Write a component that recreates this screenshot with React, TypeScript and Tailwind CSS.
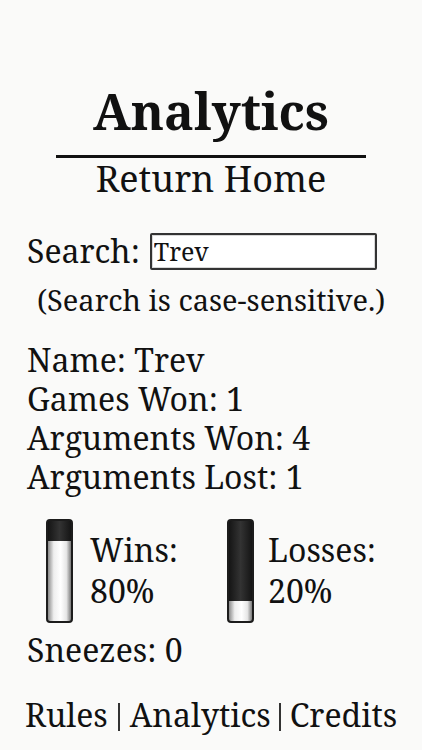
import { useState } from "react";

const SERIF = "font-['Noto_Serif','DejaVu_Serif',serif]";

// --- Cylinder gauge ---

function Gauge({ percent }: { percent: number }) {
  return (
    <div className="flex h-[104px] w-[27px] flex-col overflow-hidden rounded-[4px] border-2 border-[#1c1c1c] bg-[linear-gradient(90deg,#151515_0%,#333_50%,#151515_100%)]">
      <div className="flex-1" />
      <div
        className="w-full bg-[linear-gradient(90deg,#8a8a8a_0%,#eeeeee_25%,#ffffff_55%,#e6e6e6_80%,#7a7a7a_100%)]"
        style={{ height: `${percent}%` }}
      />
    </div>
  );
}

export default function App() {
  const [query, setQuery] = useState("Trev");

  return (
    <div className={`min-h-[750px] w-[422px] bg-[#fafaf9] text-[#111] ${SERIF}`}>
      <div className="flex flex-col items-center pt-[81px]">
        <h1 className="text-[50px] font-bold leading-[60px]">Analytics</h1>
        <div className="mt-[14px] h-[3px] w-[310px] bg-[#111]" />
        <a className="mt-[1px] text-[36px] leading-[40px]">Return Home</a>
      </div>

      <div className="mt-[32px] flex items-start pl-[27px]">
        <span className="text-[32px] leading-[40px]">Search:</span>
        <input
          value={query}
          onChange={(e) => setQuery(e.target.value)}
          className="ml-[10px] mt-[2px] h-[37px] w-[227px] rounded-[2px] border-2 border-[#333] bg-white px-[2px] text-[25px] shadow-[inset_0_0_0_1px_#d8d8d8] outline-none"
        />
      </div>
      <p className="mt-[11px] pl-[37px] text-[29px] leading-[36px]">(Search is case-sensitive.)</p>

      <div className="mt-[22px] pl-[27px] text-[32px] leading-[39px]">
        <div>Name: Trev</div>
        <div>Games Won: 1</div>
        <div>Arguments Won: 4</div>
        <div>Arguments Lost: 1</div>
      </div>

      <div className="mt-[23px] flex pl-[46px]">
        <div className="flex w-[181px] gap-[17px]">
          <Gauge percent={80} />
          <div className="pt-[10px] text-[32px] leading-[41px]">
            <div>Wins:</div>
            <div>80%</div>
          </div>
        </div>
        <div className="flex gap-[14px]">
          <Gauge percent={20} />
          <div className="pt-[10px] text-[32px] leading-[41px]">
            <div>Losses:</div>
            <div>20%</div>
          </div>
        </div>
      </div>

      <div className="mt-[7px] pl-[27px] text-[32px] leading-[40px]">Sneezes: 0</div>

      <nav className="mt-[25px] flex items-start pl-[25px] text-[32px] leading-[40px]">
        <a>Rules</a>
        <span className="ml-[10px] mr-[10px] mt-[8px] h-[28px] w-[2px] bg-[#333]" />
        <a>Analytics</a>
        <span className="ml-[8px] mr-[9px] mt-[8px] h-[28px] w-[2px] bg-[#333]" />
        <a>Credits</a>
      </nav>
    </div>
  );
}
